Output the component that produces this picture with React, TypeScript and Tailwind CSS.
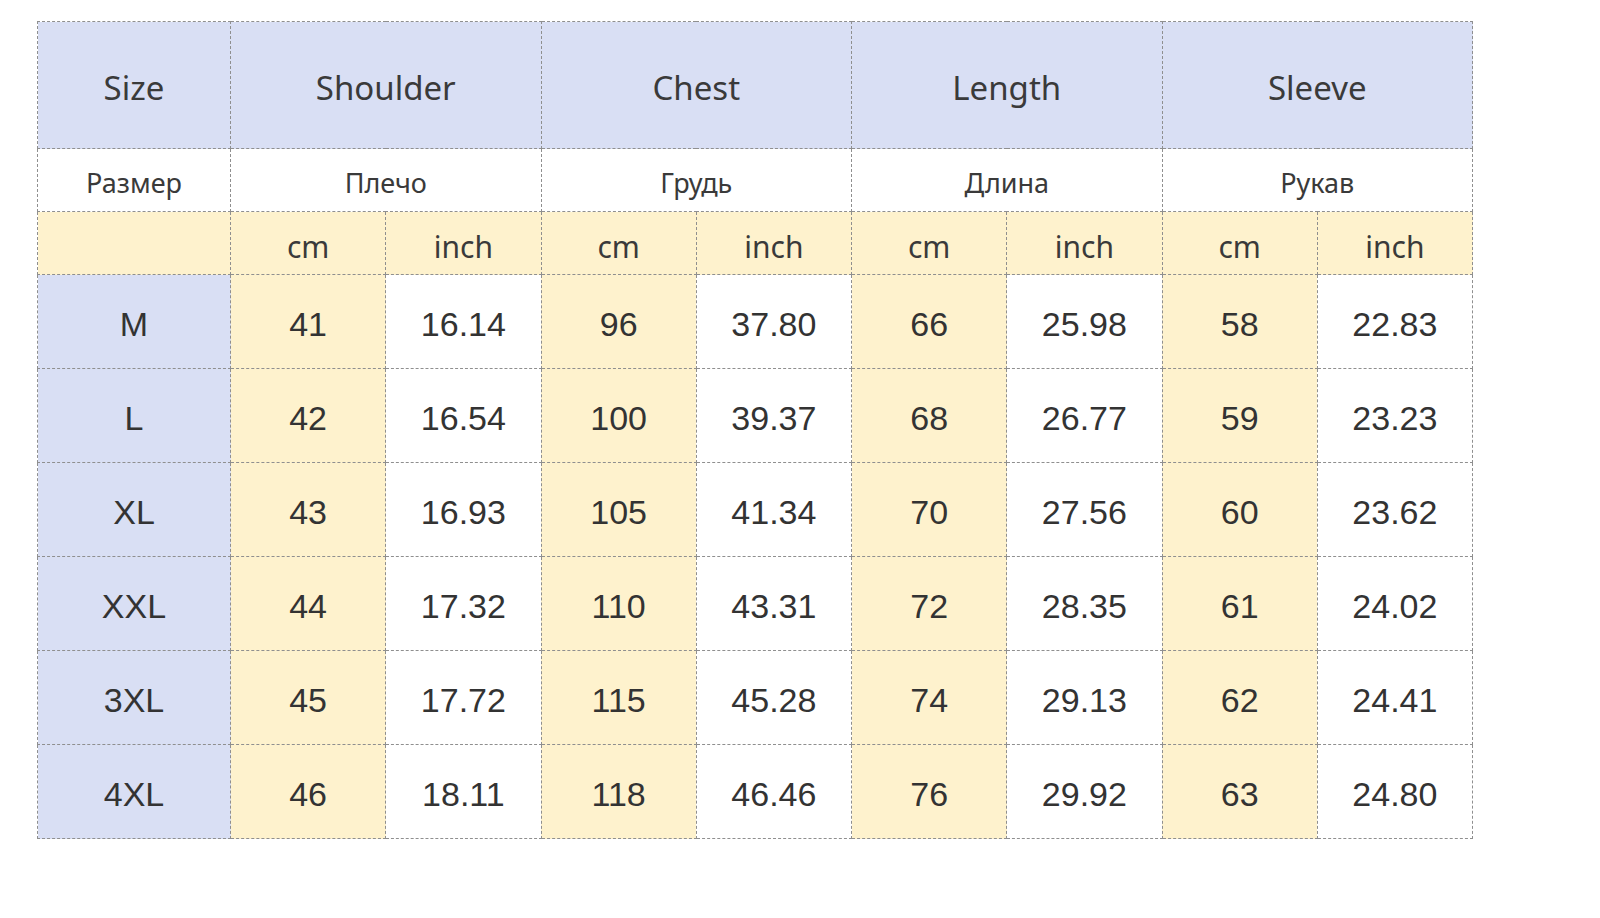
const MEASURES = [
  { en: 'Shoulder', ru: 'Плечо' },
  { en: 'Chest', ru: 'Грудь' },
  { en: 'Length', ru: 'Длина' },
  { en: 'Sleeve', ru: 'Рукав' },
];

const ROWS: [string, string[]][] = [
  ['M', ['41', '16.14', '96', '37.80', '66', '25.98', '58', '22.83']],
  ['L', ['42', '16.54', '100', '39.37', '68', '26.77', '59', '23.23']],
  ['XL', ['43', '16.93', '105', '41.34', '70', '27.56', '60', '23.62']],
  ['XXL', ['44', '17.32', '110', '43.31', '72', '28.35', '61', '24.02']],
  ['3XL', ['45', '17.72', '115', '45.28', '74', '29.13', '62', '24.41']],
  ['4XL', ['46', '18.11', '118', '46.46', '76', '29.92', '63', '24.80']],
];

const cell = 'border border-dashed border-[#8f8f8f] text-center p-0 pt-[6px]';

export default function App() {
  return (
    <div className="w-[1600px] h-[918px] bg-white pl-[37px] pt-[21px] text-[#333]">
      <table className="border-collapse table-fixed w-[1435px]">
        <colgroup>
          <col className="w-[193px]" />
          {Array.from({ length: 8 }).map((_, i) => (
            <col key={i} className="w-[155.25px]" />
          ))}
        </colgroup>
        <tbody>
          <tr className="h-[127px] bg-[#d9dff4] text-[33px] text-[#3a3a3a] font-['Noto_Sans',sans-serif]">
            <td className={cell}>Size</td>
            {MEASURES.map((m) => (
              <td key={m.en} colSpan={2} className={cell}>
                {m.en}
              </td>
            ))}
          </tr>
          <tr className="h-[63px] bg-white text-[27px] text-[#3a3a3a] font-['Noto_Sans',sans-serif]">
            <td className={cell}>Размер</td>
            {MEASURES.map((m) => (
              <td key={m.ru} colSpan={2} className={cell}>
                {m.ru}
              </td>
            ))}
          </tr>
          <tr className="h-[63px] bg-[#fef2cd] text-[30px] text-[#3a3a3a] font-['Noto_Sans',sans-serif]">
            <td className={cell}></td>
            {MEASURES.flatMap((m) => [
              <td key={m.en + 'cm'} className={cell}>cm</td>,
              <td key={m.en + 'in'} className={cell}>inch</td>,
            ])}
          </tr>
          {ROWS.map(([size, vals]) => (
            <tr key={size} className="h-[94px] text-[34px] font-['Liberation_Sans',Arial,sans-serif]">
              <td className={`${cell} bg-[#d9dff4]`}>{size}</td>
              {vals.map((v, i) => (
                <td key={i} className={`${cell} ${i % 2 === 0 ? 'bg-[#fef2cd]' : 'bg-white'}`}>
                  {v}
                </td>
              ))}
            </tr>
          ))}
        </tbody>
      </table>
    </div>
  );
}
